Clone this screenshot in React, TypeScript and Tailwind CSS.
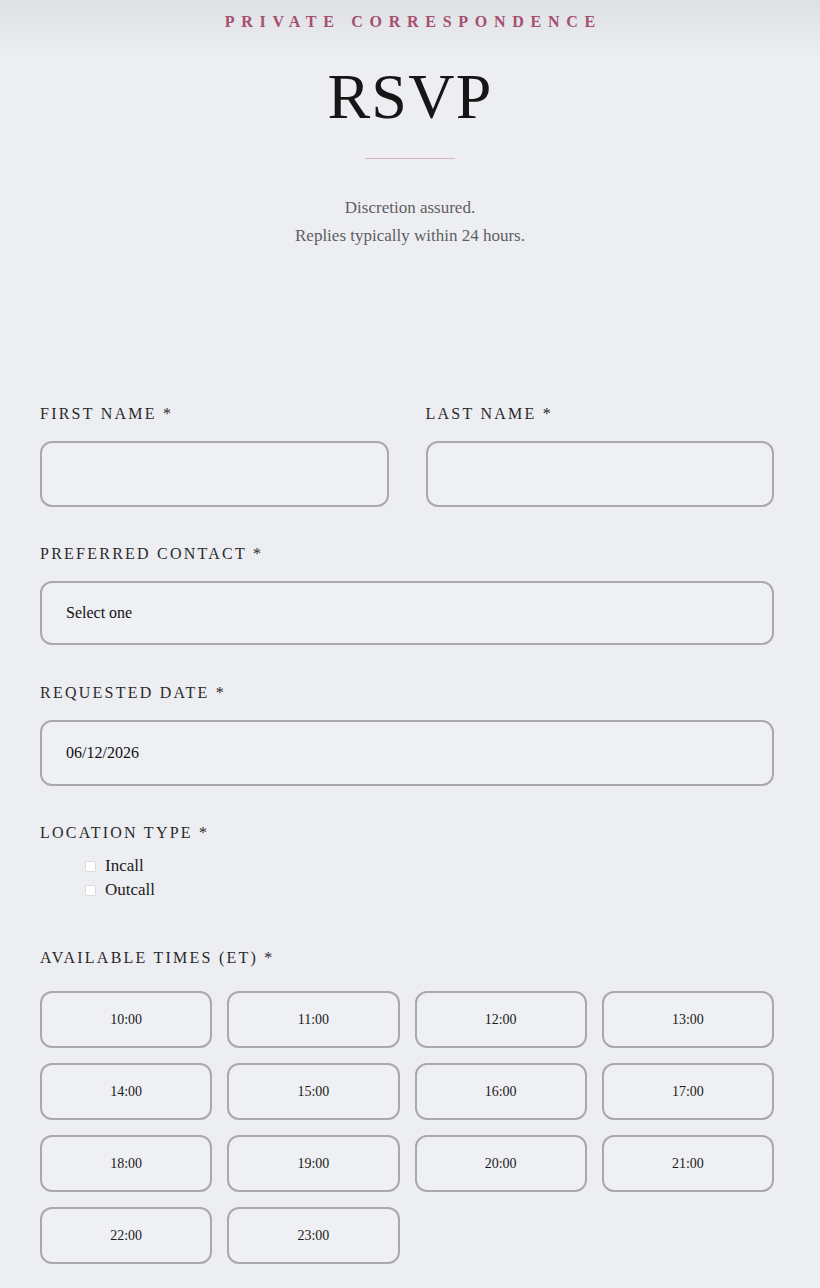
import { useState } from "react";

const TIMES = [
  "10:00", "11:00", "12:00", "13:00",
  "14:00", "15:00", "16:00", "17:00",
  "18:00", "19:00", "20:00", "21:00",
  "22:00", "23:00",
];

const serif = "font-['Liberation_Serif',serif]";

function Label({ children }: { children: React.ReactNode }) {
  return (
    <div className="h-[20px] text-[16px] leading-[20px] uppercase tracking-[0.14em] text-[#2a2a2a]">
      {children}
    </div>
  );
}

function Box({ children, className = "" }: { children?: React.ReactNode; className?: string }) {
  return (
    <div
      className={`flex items-center rounded-[12px] border-2 border-[#a9a9ab] bg-[#eef0f3] px-[24px] text-[16px] text-[#111] ${className}`}
    >
      {children}
    </div>
  );
}

export default function App() {
  const [picked, setPicked] = useState<string[]>([]);
  const toggle = (t: string) =>
    setPicked((p) => (p.includes(t) ? p.filter((x) => x !== t) : [...p, t]));

  return (
    <div className={`min-h-[1288px] w-[820px] bg-[#edeef2] ${serif}`}>
      {/* masthead */}
      <div className="h-[58px] bg-gradient-to-b from-[#dfe0e3] to-[#edeef2] pt-[13px] text-center">
        <div className="pl-[0.42em] text-[16px] font-semibold leading-[18px] tracking-[0.42em] text-[#a4506f]">
          PRIVATE CORRESPONDENCE
        </div>
      </div>

      <div className="text-center">
        <h1 className="mt-[4px] text-[64px] leading-[70px] tracking-[0.02em] text-[#161616]">RSVP</h1>
        <div className="mx-auto mt-[26px] h-px w-[90px] bg-[#d6b5c0]" />
        <p className="mt-[35px] text-[17px] leading-[28px] text-[#5e5e60]">
          Discretion assured.
          <br />
          Replies typically within 24 hours.
        </p>
      </div>

      {/* form */}
      <form className="mt-[154px] w-[774px] pl-[40px]">
        <div className="grid grid-cols-2 gap-x-[37px]">
          <div>
            <Label>First Name *</Label>
            <Box className="mt-[17px] h-[66px]" />
          </div>
          <div>
            <Label>Last Name *</Label>
            <Box className="mt-[17px] h-[66px]" />
          </div>
        </div>

        <div className="mt-[37px]">
          <Label>Preferred Contact *</Label>
          <Box className="mt-[17px] h-[64px]">Select one</Box>
        </div>

        <div className="mt-[38px]">
          <Label>Requested Date *</Label>
          <Box className="mt-[17px] h-[66px]">06/12/2026</Box>
        </div>

        <div className="mt-[37px]">
          <Label>Location Type *</Label>
          <div className="mt-[11px] pl-[45px] text-[17px] leading-[24px] text-[#1c1c1c]">
            {["Incall", "Outcall"].map((o) => (
              <label key={o} className="flex items-center gap-[9px]">
                <span className="h-[11px] w-[11px] rounded-[2px] border border-[#dcdcdf] bg-white" />
                {o}
              </label>
            ))}
          </div>
        </div>

        <div className="mt-[46px]">
          <Label>Available Times (ET) *</Label>
          <div className="mt-[23px] grid grid-cols-4 gap-[15px]">
            {TIMES.map((t) => (
              <button
                key={t}
                type="button"
                onClick={() => toggle(t)}
                className={`h-[57px] rounded-[12px] border-2 border-[#a9a9ab] text-[14px] text-[#1a1a1a] ${
                  picked.includes(t) ? "bg-[#e4d3da]" : "bg-[#eef0f3]"
                }`}
              >
                {t}
              </button>
            ))}
          </div>
        </div>
      </form>
    </div>
  );
}
